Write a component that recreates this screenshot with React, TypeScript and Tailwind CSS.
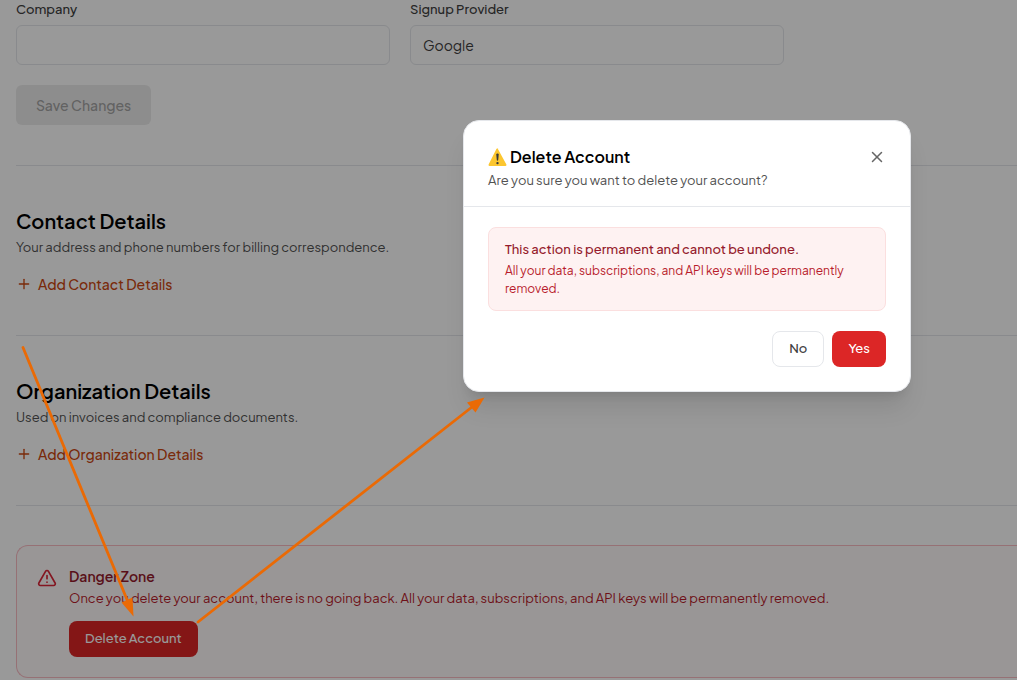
import { Plus, TriangleAlert, X } from "lucide-react";

type DetailsSectionProps = {
  title: string;
  description: string;
  action: string;
};

function DetailsSection({ title, description, action }: DetailsSectionProps) {
  return (
    <section className="border-t border-gray-200 pt-10 pb-10">
      <h2 className="text-xl leading-[29px] font-semibold text-black">{title}</h2>
      <p className="mt-0.5 text-[13px] leading-5 text-[#525252]">{description}</p>
      <button
        type="button"
        className="mt-4 flex h-[22px] items-center gap-1.5 text-sm leading-5 font-medium text-[#cb4710]"
      >
        <Plus className="size-4" />
        {action}
      </button>
    </section>
  );
}

function WarningSign() {
  return (
    <svg viewBox="0 0 20 20" className="size-5" aria-hidden="true">
      <path
        d="M9.500 1.300 18.400 17.600q.5 1.300-.9 1.400H1.500q-1.400-.1-.9-1.400L8.400 1.900q1.100-1.500 2.200 0Z"
        fill="#fcc62f"
      />
      <path
        d="M8.300 7.600q0-1.200 1.200-1.200t1.200 1.200l-.5 5.400q-.1.800-.7.800t-.7-.8Z"
        fill="#35383b"
      />
      <circle cx="9.500" cy="16.100" r="1.200" fill="#35383b" />
    </svg>
  );
}

function DeleteAccountDialog() {
  return (
    <div
      role="dialog"
      aria-modal="true"
      aria-labelledby="dialog-title"
      className="w-full max-w-md rounded-2xl border border-gray-200 bg-white shadow-xl"
    >
      <header className="border-b border-gray-200 px-6 pt-6 pb-4">
        <div className="flex items-center justify-between">
          <h2
            id="dialog-title"
            className="flex items-center gap-0.5 text-base leading-6 font-semibold text-black"
          >
            <WarningSign />
            Delete Account
          </h2>
          <button type="button" aria-label="Close" className="text-[#666]">
            <X className="size-[18px]" />
          </button>
        </div>
        <p className="mt-px text-[13px] leading-5 text-[#525252]">
          Are you sure you want to delete your account?
        </p>
      </header>

      <div className="px-6 pt-5 pb-6">
        <div className="rounded-lg border border-[#fbdfdf] bg-[#fef2f2] px-4 py-3">
          <p className="text-[13px] leading-[18px] font-medium text-[#951a2c]">
            This action is permanent and cannot be undone.
          </p>
          <p className="mt-1 text-xs leading-[18px] text-[#b81c2c]">
            All your data, subscriptions, and API keys will be permanently removed.
          </p>
        </div>

        <div className="mt-5 flex justify-end gap-2">
          <button
            type="button"
            className="h-9 rounded-lg border border-gray-200 px-4 text-[13px] font-medium text-[#404040]"
          >
            No
          </button>
          <button
            type="button"
            className="h-9 rounded-lg bg-[#dc2626] px-4 text-[13px] font-medium text-white"
          >
            Yes
          </button>
        </div>
      </div>
    </div>
  );
}

export default function App() {
  return (
    <div className="relative min-h-screen overflow-hidden bg-white font-['Plus_Jakarta_Sans',Inter,sans-serif]">
      <main className="pl-4">
        <form className="pb-10">
          <div className="grid max-w-[768px] grid-cols-2 gap-5">
            <div className="flex flex-col gap-[7px]">
              <label htmlFor="company" className="text-[13px] leading-[18px] font-medium text-[#404040]">
                Company
              </label>
              <input
                id="company"
                type="text"
                className="h-10 w-full rounded-md border border-gray-200 px-3 text-sm text-[#404040]"
              />
            </div>
            <div className="flex flex-col gap-[7px]">
              <label htmlFor="provider" className="text-[13px] leading-[18px] font-medium text-[#404040]">
                Signup Provider
              </label>
              <input
                id="provider"
                type="text"
                readOnly
                defaultValue="Google"
                className="h-10 w-full rounded-md border border-gray-200 px-3 text-sm text-[#404040]"
              />
            </div>
          </div>
          <button
            type="button"
            disabled
            className="mt-5 h-10 rounded-md bg-[#ececec] px-5 text-sm font-medium text-[#a3a3a3]"
          >
            Save Changes
          </button>
        </form>

        <DetailsSection
          title="Contact Details"
          description="Your address and phone numbers for billing correspondence."
          action="Add Contact Details"
        />
        <DetailsSection
          title="Organization Details"
          description="Used on invoices and compliance documents."
          action="Add Organization Details"
        />

        {/* Danger zone */}
        <div className="border-t border-gray-200 pt-[39px]">
          <section className="flex gap-3 rounded-l-xl border-y border-l border-[#fabcc4] bg-[#fffafa] p-5">
            <TriangleAlert className="mt-0.5 size-5 shrink-0 text-[#dc2638]" />
            <div>
              <h2 className="text-sm leading-5 font-semibold text-[#951a2c]">Danger Zone</h2>
              <p className="mt-0.5 text-[13px] leading-5 text-[#b81c2c]">
                Once you delete your account, there is no going back. All your data, subscriptions,
                and API keys will be permanently removed.
              </p>
              <button
                type="button"
                className="mt-[13px] h-9 rounded-lg bg-[#dc2626] px-4 text-[13px] font-medium text-white"
              >
                Delete Account
              </button>
            </div>
          </section>
        </div>
      </main>

      {/* Backdrop */}
      <div className="absolute inset-0 flex items-start justify-end bg-black/40 pt-30 pr-[106px]">
        <DeleteAccountDialog />
      </div>

      {/* Arrows from the details to the delete button and on to the dialog */}
      <svg
        width="500"
        height="680"
        className="pointer-events-none absolute top-0 left-0"
        aria-hidden="true"
      >
        <g stroke="#ea6a05" strokeWidth="2.8" strokeLinecap="round">
          <path d="M23 347.500 128 602" />
          <path d="M198 622 472 407" />
        </g>
        <g fill="#ea6a05">
          <path d="M133.500 616.500 121.500 602.500 132.500 597.500Z" />
          <path d="M484.500 397.500 467 402.500 475.500 412.500Z" />
        </g>
      </svg>
    </div>
  );
}
